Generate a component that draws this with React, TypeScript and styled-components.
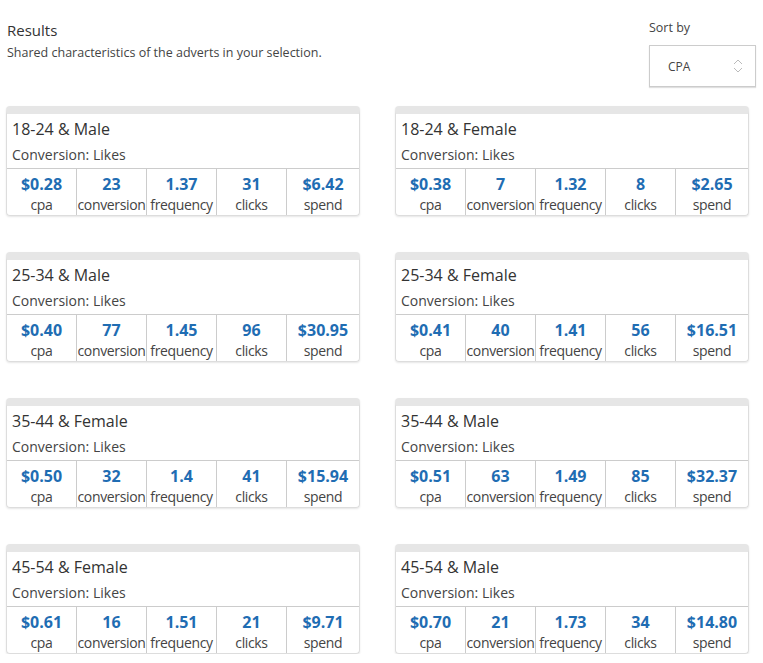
import React, { FC } from 'react';
import styled, { createGlobalStyle } from 'styled-components';

const GlobalStyle = createGlobalStyle`
  body {
    margin: 0;
    background: #fff;
    font-family: 'Open Sans', 'Liberation Sans', sans-serif;
    color: #333;
  }
`;

const Page = styled.div`
  width: 763px;
  padding: 0 7px 0 6px;
  box-sizing: border-box;
`;

const Header = styled.div`
  display: flex;
  justify-content: space-between;
  align-items: flex-start;
  height: 106px;
`;

const Intro = styled.div`
  padding: 19px 0 0 1px;
`;

const Title = styled.div`
  font-size: 15px;
  line-height: 22px;
  color: #333;
`;

const Subtitle = styled.div`
  font-size: 12.5px;
  line-height: 18px;
  color: #444;
  margin-top: 3px;
`;

const SortBox = styled.div`
  padding-top: 19px;
  width: 107px;
`;

const SortLabel = styled.div`
  font-size: 12.5px;
  line-height: 18px;
  color: #444;
  margin-bottom: 8px;
`;

const Select = styled.div`
  height: 42px;
  box-sizing: border-box;
  border: 1px solid #ccc;
  box-shadow: 0 1px 1px rgba(0, 0, 0, 0.12);
  display: flex;
  align-items: center;
  justify-content: space-between;
  padding: 0 12px 0 18px;
  font-size: 12px;
  color: #444;
`;

const Grid = styled.div`
  display: grid;
  grid-template-columns: 354px 354px;
  column-gap: 35px;
  row-gap: 36px;
`;

const Card = styled.div`
  height: 110px;
  box-sizing: border-box;
  border: 1px solid #ddd;
  border-top: 8px solid #e6e6e6;
  border-radius: 4px;
  box-shadow: 0 1px 2px rgba(0, 0, 0, 0.1);
  display: flex;
  flex-direction: column;
  overflow: hidden;
`;

const CardHead = styled.div`
  padding: 3px 6px 0 5px;
  height: 55px;
  box-sizing: border-box;
  border-bottom: 1px solid #ccc;
`;

const CardTitle = styled.div`
  font-size: 16px;
  line-height: 24px;
  color: #333;
`;

const CardSub = styled.div`
  font-size: 14px;
  line-height: 20px;
  margin-top: 4px;
  color: #444;
`;

const Stats = styled.div`
  flex: 1;
  display: grid;
  grid-template-columns: 69px 70px 70px 70px minmax(0, 1fr);
`;

const Stat = styled.div`
  text-align: center;
  overflow: hidden;
  white-space: nowrap;
  padding-top: 5px;
  & + & {
    border-left: 1px solid #ccc;
  }
`;

const Value = styled.div`
  font-size: 16px;
  font-weight: 700;
  line-height: 20px;
  color: #1f6db3;
`;

const Label = styled.div`
  font-size: 14px;
  line-height: 21px;
  letter-spacing: -0.35px;
  color: #444;
`;

interface Segment {
  title: string;
  cpa: string;
  conversion: string;
  frequency: string;
  clicks: string;
  spend: string;
}

const segments: Segment[] = [
  { title: '18-24 & Male', cpa: '$0.28', conversion: '23', frequency: '1.37', clicks: '31', spend: '$6.42' },
  { title: '18-24 & Female', cpa: '$0.38', conversion: '7', frequency: '1.32', clicks: '8', spend: '$2.65' },
  { title: '25-34 & Male', cpa: '$0.40', conversion: '77', frequency: '1.45', clicks: '96', spend: '$30.95' },
  { title: '25-34 & Female', cpa: '$0.41', conversion: '40', frequency: '1.41', clicks: '56', spend: '$16.51' },
  { title: '35-44 & Female', cpa: '$0.50', conversion: '32', frequency: '1.4', clicks: '41', spend: '$15.94' },
  { title: '35-44 & Male', cpa: '$0.51', conversion: '63', frequency: '1.49', clicks: '85', spend: '$32.37' },
  { title: '45-54 & Female', cpa: '$0.61', conversion: '16', frequency: '1.51', clicks: '21', spend: '$9.71' },
  { title: '45-54 & Male', cpa: '$0.70', conversion: '21', frequency: '1.73', clicks: '34', spend: '$14.80' },
];

const keys: (keyof Omit<Segment, 'title'>)[] = ['cpa', 'conversion', 'frequency', 'clicks', 'spend'];

const UpDown: FC = () => (
  <svg width="10" height="16" viewBox="0 0 10 16" fill="none" stroke="#bbb" strokeWidth="1">
    <path d="M1 6 L5 2 L9 6" />
    <path d="M1 10 L5 14 L9 10" />
  </svg>
);

const App: FC = () => {
  return (
    <>
      <GlobalStyle />
      <Page>
        <Header>
          <Intro>
            <Title>Results</Title>
            <Subtitle>Shared characteristics of the adverts in your selection.</Subtitle>
          </Intro>
          <SortBox>
            <SortLabel>Sort by</SortLabel>
            <Select>
              <span>CPA</span>
              <UpDown />
            </Select>
          </SortBox>
        </Header>
        <Grid>
          {segments.map((s) => (
            <Card key={s.title}>
              <CardHead>
                <CardTitle>{s.title}</CardTitle>
                <CardSub>Conversion: Likes</CardSub>
              </CardHead>
              <Stats>
                {keys.map((k) => (
                  <Stat key={k}>
                    <Value>{s[k]}</Value>
                    <Label>{k}</Label>
                  </Stat>
                ))}
              </Stats>
            </Card>
          ))}
        </Grid>
      </Page>
    </>
  );
};

export default App;
